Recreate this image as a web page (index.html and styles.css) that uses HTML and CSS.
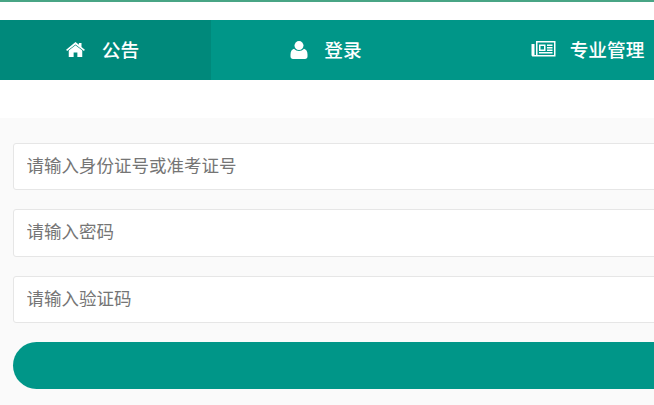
FILE: index.html

```html
<!DOCTYPE html>
<html lang="zh-CN">
<head>
    <meta charset="UTF-8">
    <meta name="viewport" content="width=device-width, initial-scale=1.0">
    <title>公告</title>
    <link rel="stylesheet" href="styles.css">
</head>
<body>
    <div class="page">
        <div class="top-line"></div>
        <div class="navbar">
            <a class="nav-item nav-first active" href="#">
                <svg class="icon icon-home" viewBox="0 0 20 16"><path d="M10 0 13.600 2.900V1h2.800V5.200L20 8.300 19 9.700 10 2.700 1 9.700 0 8.300z"/><path d="M10 3.400 17.200 9V16H12V11.200H8V16H2.800V9z"/></svg>
                <span>公告</span>
            </a>
            <a class="nav-item" href="#">
                <svg class="icon icon-user" viewBox="0 0 17 18"><circle cx="8.500" cy="4.600" r="4.500"/><path d="M3.500 7.800C5 9.400 6.600 10 8.500 10s3.500-.6 5-2.200C15.500 8.300 17 10.300 17 13.500V15.500C17 17 16 18 14.500 18H2.500C1 18 0 17 0 15.500V13.500C0 10.300 1.500 8.300 3.500 7.800z"/></svg>
                <span>登录</span>
            </a>
            <a class="nav-item" href="#">
                <svg class="icon icon-news" viewBox="0 0 24 16"><path fill-rule="evenodd" d="M4.500 0H24V15.500H1.500C.6 15.500 0 14.900 0 14V3H3V14H4.500zM6 1.500V14H22.500V1.500z"/><path fill-rule="evenodd" d="M7.500 3.500H14V10H7.500zM9 5V8.500H12.500V5z"/><path d="M15.500 3.500H21V5H15.500zM15.500 6H21V7.500H15.500zM15.500 8.500H21V10H15.500zM7.500 11H21V12.500H7.500z"/></svg>
                <span>专业管理</span>
            </a>
        </div>
        <form class="login-form">
            <input class="field" type="text" placeholder="请输入身份证号或准考证号">
            <input class="field" type="password" placeholder="请输入密码">
            <input class="field" type="text" placeholder="请输入验证码">
            <button class="btn" type="button"></button>
        </form>
    </div>
</body>
</html>
```

FILE: styles.css

```css
html, body {
    margin: 0;
    padding: 0;
    background-color: #fff;
    overflow: hidden;
}
body {
    font-family: "Noto Sans CJK SC", "Noto Sans", sans-serif;
    color: #333;
}
.page {
    width: 734px;
    height: 405px;
}
.top-line {
    height: 2px;
    background-color: #48a585;
    margin-bottom: 18px;
}
.navbar {
    display: grid;
    grid-template-columns: 211px 230px 293px;
    height: 60px;
    background-color: #009688;
    margin-bottom: 38px;
}
.nav-item {
    display: flex;
    align-items: center;
    justify-content: center;
    color: #fff;
    font-size: 18.7px;
    font-weight: 500;
    text-decoration: none;
}
.nav-item span {
    padding-bottom: 4px;
}
.nav-first {
    padding-right: 6px;
}
.nav-item.active {
    background-color: #00897b;
}
.icon {
    fill: #fff;
    flex: none;
}
.icon-home {
    width: 19px;
    height: 15px;
    margin-right: 17px;
    margin-top: -1px;
}
.icon-user {
    width: 18px;
    height: 18px;
    margin-right: 16px;
    margin-bottom: 1px;
}
.icon-news {
    width: 25px;
    height: 16px;
    margin-right: 14px;
    margin-bottom: 3px;
}
.login-form {
    display: flex;
    flex-direction: column;
    gap: 19.2px;
    height: 287px;
    box-sizing: border-box;
    padding: 25px 13px 0;
    background-color: #fafafa;
}
.field {
    height: 47.2px;
    box-sizing: border-box;
    padding: 0 13px 4px 12.6px;
    border: 1px solid #e6e6e6;
    border-radius: 3px;
    background: #fff;
    font-family: inherit;
    font-size: 17.5px;
    color: #333;
    outline: none;
}
.field::placeholder {
    color: #757575;
    opacity: 1;
}
.btn {
    height: 47.2px;
    border: none;
    border-radius: 24px;
    background-color: #009688;
}
```
